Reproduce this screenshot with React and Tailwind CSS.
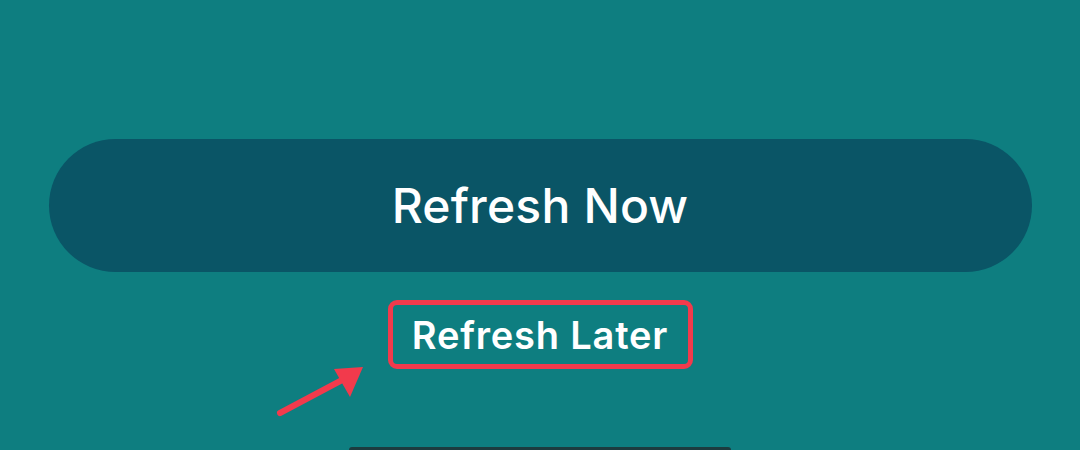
import React from 'react';

const App = () => {
  return (
    <div
      className="relative w-[1080px] h-[450px] overflow-hidden bg-[#0e7e80] flex flex-col items-center"
      style={{ fontFamily: 'Inter, "Open Sans", sans-serif' }}
    >
      <button className="mt-[139px] w-[983px] h-[133px] rounded-full bg-[#0a5566] text-white text-[48px] font-medium tracking-[0.2px] flex items-center justify-center">
        Refresh Now
      </button>

      {/* annotated secondary action */}
      <div className="mt-[28px] w-[305px] h-[69px] border-[5px] border-[#f23a4c] rounded-[9px] flex items-center justify-center">
        <span className="text-white text-[38px] font-semibold leading-none tracking-[0.8px]">Refresh Later</span>
      </div>

      <div className="mt-auto w-[382px] h-[3px] rounded-t-md bg-[#1c3c3f]" />

      {/* arrow annotation */}
      <svg className="absolute left-[272px] top-[360px]" width="100" height="60" viewBox="0 0 100 60">
        <line x1="8" y1="53" x2="72" y2="19" stroke="#f23a4c" strokeWidth="6" strokeLinecap="round" />
        <polygon points="91,7 62,9 78,37" fill="#f23a4c" />
      </svg>
    </div>
  );
};

export default App;
